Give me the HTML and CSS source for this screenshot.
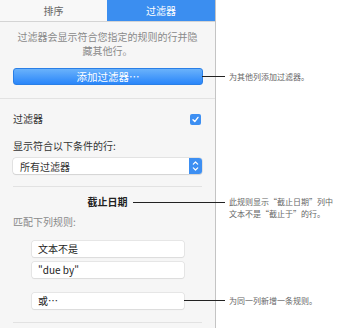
FILE: index.html
```html
<!DOCTYPE html>
<html lang="zh-CN">
<head>
    <meta charset="UTF-8">
    <meta name="viewport" content="width=device-width, initial-scale=1.0">
    <title>过滤器</title>
    <link rel="stylesheet" href="styles.css">
</head>
<body>
    <div class="page">
        <div class="panel">
            <div class="tabs">
                <div class="tab">排序</div>
                <div class="tab active">过滤器</div>
            </div>

            <div class="section intro">
                <p class="intro-text">过滤器会显示符合您指定的规则的行并隐<br>藏其他行。</p>
                <div class="noted">
                    <button class="add-btn">添加过滤器…</button>
                    <span class="lead lead-btn"></span>
                    <span class="note">为其他列添加过滤器。</span>
                </div>
            </div>

            <div class="section options">
                <div class="check-row">
                    <span>过滤器</span>
                    <span class="checkbox">
                        <svg width="11" height="11" viewBox="0 0 11 11">
                            <path d="M3 5.8 L4.8 7.6 L8 3.4" fill="none" stroke="#fff" stroke-width="1.4" stroke-linecap="round" stroke-linejoin="round"/>
                        </svg>
                    </span>
                </div>
                <div class="label">显示符合以下条件的行:</div>
                <div class="select">
                    <span>所有过滤器</span>
                    <span class="stepper">
                        <svg width="13" height="16" viewBox="0 0 13 16">
                            <path d="M4.3 6.2 L6.5 4 L8.7 6.2" fill="none" stroke="#fff" stroke-width="1.2" stroke-linecap="round" stroke-linejoin="round"/>
                            <path d="M4.3 9.8 L6.5 12 L8.7 9.8" fill="none" stroke="#fff" stroke-width="1.2" stroke-linecap="round" stroke-linejoin="round"/>
                        </svg>
                    </span>
                </div>
            </div>

            <div class="section rules">
                <div class="noted column-title">
                    <span>截止日期</span>
                    <span class="lead lead-title"></span>
                    <span class="note note-top">此规则显示“截止日期”列中<br>文本不是“截止于”的行。</span>
                </div>
                <div class="label muted">匹配下列规则:</div>
                <div class="field first">文本不是</div>
                <div class="field">"due by"</div>
                <div class="noted or-row">
                    <div class="field">或…</div>
                    <span class="lead lead-or"></span>
                    <span class="note">为同一列新增一条规则。</span>
                </div>
            </div>
        </div>
    </div>
</body>
</html>
```

FILE: styles.css
```css
body {
    margin: 0;
    padding: 0;
    background-color: #fff;
    font-family: 'Noto Sans CJK SC', 'Noto Sans', sans-serif;
    font-size: 10px;
    color: #333;
}

.page {
    width: 346px;
    height: 328px;
    overflow: hidden;
}

.panel {
    width: 215px;
    height: 328px;
    background-color: #f6f6f6;
    border-right: 1px solid #c4c4c4;
}

.tabs {
    display: flex;
    height: 21px;
    border-bottom: 1px solid #d4d4d4;
}

.tab {
    width: 107px;
    display: flex;
    align-items: center;
    justify-content: center;
    color: #666;
    background-color: #f8f8f8;
}

.tab.active {
    flex: 1;
    background-color: #3b8ef0;
    color: #fff;
}

.section {
    padding: 0 13px;
}

.intro {
    padding-top: 8px;
    padding-bottom: 13px;
    border-bottom: 1px solid #e2e2e2;
}

.intro-text {
    margin: 0 0 10px;
    text-align: center;
    line-height: 14px;
    color: #8a8a8a;
}

.noted {
    position: relative;
}

.add-btn {
    display: block;
    width: 190px;
    height: 17px;
    padding: 0;
    border: 1px solid #2a7fe6;
    border-radius: 3px;
    background: linear-gradient(#6ab2fb, #2a86fa);
    color: #fff;
    font-family: inherit;
    font-size: 10.5px;
    line-height: 15px;
}

.lead {
    position: absolute;
    height: 1px;
    background-color: #222;
}

.lead-btn {
    left: 189px;
    width: 23px;
    top: 8px;
}

.note {
    position: absolute;
    left: 216px;
    top: 50%;
    transform: translateY(-50%);
    white-space: nowrap;
    font-size: 8px;
    font-weight: normal;
    line-height: 12px;
    color: #666;
    text-align: left;
}

.note-top {
    top: 1px;
    transform: none;
}

.options {
    padding-top: 13px;
    padding-bottom: 13px;
}

.check-row {
    display: flex;
    justify-content: space-between;
    align-items: center;
    height: 14px;
    line-height: 14px;
    padding-right: 1px;
}

.checkbox {
    width: 11px;
    height: 11px;
    border-radius: 2px;
    background-color: #3d8ff2;
    display: flex;
}

.label {
    margin-top: 13px;
    line-height: 14px;
}

.select {
    margin-top: 5px;
    height: 16px;
    display: flex;
    align-items: center;
    justify-content: space-between;
    background-color: #fff;
    border-radius: 3px;
    box-shadow: 0 0 0 0.5px #cfcfcf, 0 1px 1px rgba(0, 0, 0, 0.12);
    padding-left: 7px;
    overflow: hidden;
}

.stepper {
    width: 13px;
    height: 16px;
    background-color: #3d8ff2;
    display: flex;
}

.rules {
    position: relative;
    padding-top: 8px;
    padding-bottom: 15px;
}

.rules::before,
.rules::after {
    content: "";
    position: absolute;
    left: 13px;
    right: 13px;
    height: 1px;
    background-color: #e2e2e2;
}

.rules::before {
    top: -1px;
}

.rules::after {
    bottom: 1px;
}

.column-title {
    text-align: center;
    font-weight: bold;
    color: #222;
    line-height: 14px;
}

.lead-title {
    left: 120px;
    width: 92px;
    top: 7px;
}

.muted {
    margin-top: 6px;
    color: #8a8a8a;
}

.field {
    width: 152px;
    height: 16px;
    margin: 5px 0 0 19px;
    padding-left: 6px;
    line-height: 16px;
    background-color: #fff;
    border-radius: 2px;
    box-shadow: 0 0 0 0.5px #d6d6d6, 0 1px 1px rgba(0, 0, 0, 0.08);
    box-sizing: border-box;
    color: #222;
}

.field.first {
    margin-top: 12px;
}

.or-row {
    margin-top: 15px;
}

.or-row .field {
    margin-top: 0;
}

.lead-or {
    left: 171px;
    width: 41px;
    top: 7px;
}
```
